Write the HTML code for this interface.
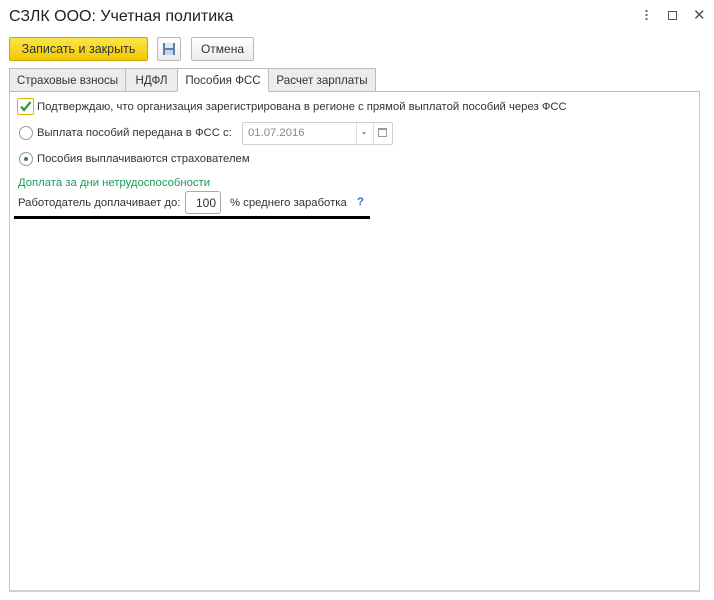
<!DOCTYPE html>
<html><head><meta charset="utf-8"><style>
*{box-sizing:border-box}
body{margin:0;width:714px;height:600px;background:#fff;font-family:"Liberation Sans","Noto Sans CJK SC",sans-serif;font-size:11.3px;color:#333;position:relative;overflow:hidden}
.a{position:absolute;white-space:nowrap}
.title{left:9px;top:8px;font-size:16px;color:#222}
.btn{position:absolute;border:1px solid #b8b8b8;border-radius:2px;background:linear-gradient(#fff,#ececec);height:24px;line-height:23px;text-align:center;font-size:12px}
.tab{position:absolute;top:68px;height:24px;border:1px solid #bdbdbd;background:#ececec;line-height:23px;text-align:center;color:#333;font-size:11.6px}
.panel{position:absolute;left:9px;top:91px;width:691px;height:501px;border:1px solid #c6c6c6;border-top-color:#bdbdbd;border-bottom:2px solid #d0d0d0}
.radio{position:absolute;width:14px;height:14px;border:1px solid #999;border-radius:50%;background:#fff}
</style></head><body>
<div class="a title">СЗЛК ООО: Учетная политика</div>
<div class="a" style="left:645px;top:9px;width:3px;height:12px;background:radial-gradient(circle,#666 1px,transparent 1.3px) 0 0/3px 4px"></div>
<div class="a" style="left:668px;top:11px;width:9px;height:9px;border:1.5px solid #555"></div>
<div class="a" style="left:693px;top:6px;font-size:15px;color:#555">✕</div>

<div class="btn" style="left:9px;top:37px;width:139px;background:linear-gradient(#fbe64a,#f0c800);border-color:#c9a700;color:#333;font-size:12.5px">Записать и закрыть</div>
<div class="btn" style="left:157px;top:37px;width:24px">
<svg width="14" height="14" viewBox="0 0 14 14" style="margin-top:4px"><rect x="1" y="1" width="12" height="12" fill="#5a7fb0"/><rect x="3" y="1" width="8" height="5" fill="#dfe8f3"/><rect x="3" y="8" width="8" height="5" fill="#c9d4e3"/></svg></div>
<div class="btn" style="left:191px;top:37px;width:63px">Отмена</div>

<div class="tab" style="left:9px;width:117px">Страховые взносы</div>
<div class="tab" style="left:125px;width:53px">НДФЛ</div>
<div class="tab" style="left:177px;width:92px;background:#fff;border-bottom-color:#fff;z-index:2;height:24px">Пособия ФСС</div>
<div class="tab" style="left:268px;width:108px">Расчет зарплаты</div>
<div class="panel"></div>

<div class="a" style="left:17px;top:98px;width:17px;height:17px;border:1px solid #e0b400;border-radius:2px;background:#fff">
<svg width="15" height="15" viewBox="0 0 15 15"><path d="M3 7.5 L6 11 L12.5 3" stroke="#2a9a3a" stroke-width="2.2" fill="none"/></svg></div>
<div class="a" style="left:37px;top:101px">Подтверждаю, что организация зарегистрирована в регионе с прямой выплатой пособий через ФСС</div>

<div class="radio" style="left:19px;top:126px"></div>
<div class="a" style="left:37px;top:127px">Выплата пособий передана в ФСС с:</div>
<div class="a" style="left:242px;top:122px;width:151px;height:23px;border:1px solid #cfcfcf;border-radius:2px"></div>
<div class="a" style="left:248px;top:127px;color:#888">01.07.2016</div>
<div class="a" style="left:356px;top:123px;width:1px;height:21px;background:#ddd"></div>
<div class="a" style="left:373px;top:123px;width:1px;height:21px;background:#ddd"></div>
<div class="a" style="left:362px;top:132px;border:2.5px solid transparent;border-top:3px solid #999"></div>
<div class="a" style="left:378px;top:128px;width:9px;height:9px;border:1px solid #999;border-top-width:2px"></div>

<div class="radio" style="left:19px;top:152px"></div>
<div class="a" style="left:24px;top:157px;width:4px;height:4px;border-radius:50%;background:#2a8a3a"></div>
<div class="a" style="left:37px;top:153px">Пособия выплачиваются страхователем</div>

<div class="a" style="left:18px;top:177px;color:#1a9a5a">Доплата за дни нетрудоспособности</div>
<div class="a" style="left:18px;top:197px">Работодатель доплачивает до:</div>
<div class="a" style="left:185px;top:191px;width:36px;height:23px;border:1px solid #aaa;border-radius:3px;text-align:right;padding-right:4px;line-height:22px;font-size:12px">100</div>
<div class="a" style="left:230px;top:197px">% среднего заработка</div>
<div class="a" style="left:357px;top:196px;color:#2a6fc0;font-weight:bold">?</div>
<div class="a" style="left:14px;top:216px;width:356px;height:3px;background:#000"></div>
</body></html>
